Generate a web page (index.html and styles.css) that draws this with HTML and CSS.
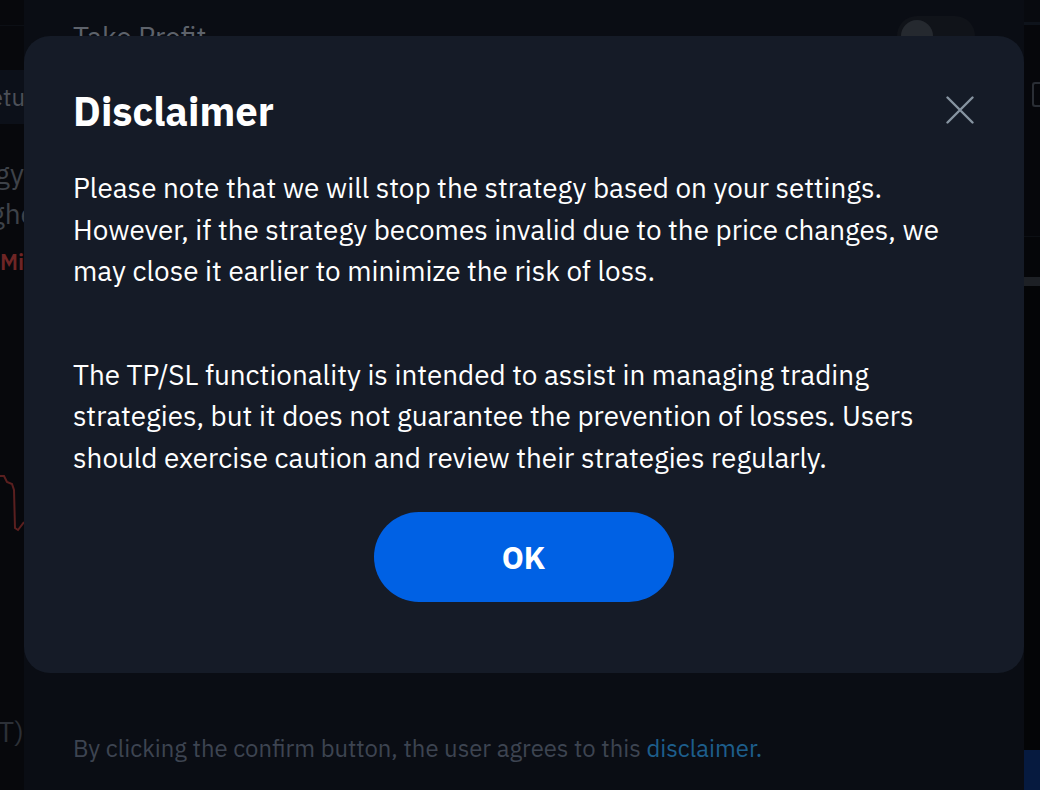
FILE: index.html
```html
<!DOCTYPE html>
<html lang="en">
<head>
<meta charset="utf-8">
<title>Disclaimer</title>
<link rel="stylesheet" href="styles.css">
</head>
<body>
<div class="page">
  <aside class="side-left">
    <div class="sl-top"></div>
    <div class="sl-tab"><span class="cut">Setup</span></div>
    <div class="sl-line sl-l1"><span>Strategy</span></div>
    <div class="sl-line sl-l2"><span class="cut-s">Highe</span></div>
    <div class="sl-line sl-red"><span>Mi</span></div>
    <div class="sl-chart">
      <svg width="24" height="80" viewBox="0 0 24 80"><path d="M0 18 L4 18 L7 24 L12 26 L14 32 L15 70 L18 72 L24 64" fill="none" stroke="#5a1f1f" stroke-width="2"/></svg>
    </div>
    <div class="sl-line sl-t"><span>(USDT)</span></div>
  </aside>

  <main class="panel">
    <div class="panel-head">
      <span class="panel-title">Take Profit</span>
      <span class="toggle"><span class="knob"></span></span>
    </div>
    <p class="panel-foot">By clicking the confirm button, the user agrees to this <a href="#" class="link">disclaimer.</a></p>
  </main>

  <aside class="side-right">
    <div class="sr-top"></div>
    <div class="sr-cal"><span class="cal-icon"></span></div>
    <div class="sr-sep"></div>
    <div class="sr-bar"></div>
    <div class="sr-fill"></div>
    <div class="sr-blue"></div>
  </aside>

  <div class="modal" role="dialog">
    <div class="modal-head">
      <h1 class="modal-title">Disclaimer</h1>
      <button class="close" aria-label="Close">
        <svg width="28" height="28" viewBox="0 0 28 28"><path d="M1.5 1.5 L26.5 26.5 M26.5 1.5 L1.5 26.5" stroke="#8794a1" stroke-width="2.4" stroke-linecap="round"/></svg>
      </button>
    </div>
    <p class="modal-text">Please note that we will stop the strategy based on your settings. However, if the strategy becomes invalid due to the price changes, we may close it earlier to minimize the risk of loss.</p>
    <p class="modal-text">The TP/SL functionality is intended to assist in managing trading strategies, but it does not guarantee the prevention of losses. Users should exercise caution and review their strategies regularly.</p>
    <div class="modal-actions">
      <button class="ok">OK</button>
    </div>
  </div>
</div>
</body>
</html>
```

FILE: styles.css
```css
* { box-sizing: border-box; }
html, body { margin: 0; padding: 0; }
body {
  background: #06070a;
  font-family: "IBM Plex Sans", "Inter", "Noto Sans", sans-serif;
  width: 1040px;
  height: 790px;
  overflow: hidden;
}
.page {
  position: relative;
  display: flex;
  width: 1040px;
  height: 790px;
}

/* left strip */
.side-left {
  width: 24px;
  flex: none;
  background: #07080c;
  display: flex;
  flex-direction: column;
  overflow: hidden;
}
.sl-top { height: 26px; border-bottom: 1px solid #0c0f15; }
.sl-tab {
  margin-top: 44px;
  height: 54px;
  background: #0c1019;
  display: flex;
  justify-content: flex-end;
  align-items: center;
  color: #4c5058;
  font-size: 24px;
  white-space: nowrap;
}
.cut { margin-right: -15px; }
.cut-s { margin-right: -12px; }
.sl-line {
  display: flex;
  justify-content: flex-end;
  white-space: nowrap;
  color: #3e4249;
  font-size: 28px;
  line-height: 40px;
}
.sl-l1 { margin-top: 30px; }
.sl-red { color: #6e2525; font-size: 22px; font-weight: 600; margin-top: 8px; }
.sl-chart { margin-top: 176px; height: 80px; }
.sl-t { margin-top: 174px; color: #2c3037; }

/* main panel */
.panel {
  width: 1000px;
  flex: none;
  background: #0a0d14;
  display: flex;
  flex-direction: column;
  justify-content: space-between;
  padding: 0 48px 0 49px;
}
.panel-head {
  display: flex;
  justify-content: space-between;
  align-items: flex-start;
  padding-top: 16px;
}
.panel-title {
  color: #5d626b;
  font-size: 28px;
  line-height: 40px;
  margin-top: 1px;
}
.toggle {
  width: 78px;
  height: 40px;
  border-radius: 20px;
  background: #101319;
  padding: 4px;
  margin-right: 1px;
}
.knob {
  display: block;
  width: 32px;
  height: 32px;
  border-radius: 50%;
  background: #25292f;
}
.panel-foot {
  margin: 0 0 26px;
  color: #3d4451;
  font-size: 23.85px;
  line-height: 30px;
}
.link { color: #1d5e8c; text-decoration: none; }

/* right strip */
.side-right {
  width: 16px;
  flex: none;
  background: #050609;
  display: flex;
  flex-direction: column;
}
.sr-top { height: 25px; background: #080a0f; border-bottom: 3px solid #0e131b; }
.sr-cal { height: 212px; padding: 57px 0 0 8px; background: #06070b; border-bottom: 1px solid #0c0f14; }
.cal-icon {
  display: block;
  width: 14px;
  height: 25px;
  border: 2px solid #2a2e35;
  border-radius: 3px;
  border-right: none;
}
.sr-sep { height: 40px; background: #050609; }
.sr-bar { height: 9px; background: #1d2025; }
.sr-fill { flex: 1; background: #040507; }
.sr-blue { height: 40px; background: #061a3f; }

/* modal */
.modal {
  position: absolute;
  left: 24px;
  top: 36px;
  width: 1000px;
  height: 637px;
  background: #151b27;
  border-radius: 26px;
  padding: 50px 50px 0 49px;
  display: flex;
  flex-direction: column;
}
.modal-head {
  display: flex;
  justify-content: space-between;
  align-items: flex-start;
}
.modal-title {
  margin: 0;
  color: #ffffff;
  font-size: 40px;
  font-weight: 700;
  line-height: 50px;
}
.close {
  background: none;
  border: none;
  padding: 0;
  margin-top: 10px;
  width: 28px;
  height: 28px;
  cursor: pointer;
}
.close svg { display: block; }
.modal-text {
  margin: 0;
  color: #ffffff;
  font-size: 27.85px;
  line-height: 41.5px;
  padding-right: 20px;
}
.modal-head + .modal-text { margin-top: 31px; }
.modal-text + .modal-text { margin-top: 62px; }
.modal-actions {
  display: flex;
  justify-content: center;
  margin-top: 34px;
}
.ok {
  width: 300px;
  height: 90px;
  border: none;
  border-radius: 45px;
  background: #0061e4;
  color: #ffffff;
  font-family: inherit;
  font-size: 31px;
  font-weight: 800;
  cursor: pointer;
}
```
